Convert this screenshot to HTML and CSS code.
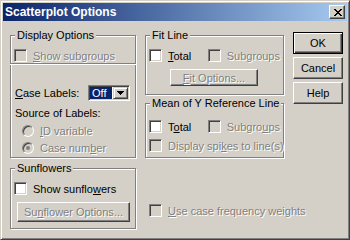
FILE: index.html
```html
<!DOCTYPE html>
<html lang="en">
<head>
  <meta charset="UTF-8">
  <title>Scatterplot Options</title>
  <link rel="stylesheet" href="styles.css">
</head>
<body>
  <div class="window">
    <div class="titlebar">
      <span class="title">Scatterplot Options</span>
      <span class="close-btn">
        <svg width="8" height="7" viewBox="0 0 8 7" shape-rendering="crispEdges">
          <path d="M0 0h2v1H0zM6 0h2v1H6zM1 1h2v1H1zM5 1h2v1H5zM2 2h4v1H2zM3 3h2v1H3zM2 4h4v1H2zM1 5h2v1H1zM5 5h2v1H5zM0 6h2v1H0zM6 6h2v1H6z" fill="#000"/>
        </svg>
      </span>
    </div>

    <div class="content">
      <!-- left column -->
      <div class="col col-left">
        <fieldset class="group g-display">
          <legend>Display Options</legend>
          <div class="check disabled first-row">
            <span class="box"></span><span class="txt"><u>S</u>how subgroups</span>
          </div>
          <div class="sep"></div>
          <div class="case-row">
            <span class="case-label"><u>C</u>ase Labels:</span>
            <span class="combo">
              <span class="combo-val">Off</span>
              <span class="combo-btn">
                <svg width="7" height="4" viewBox="0 0 7 4" shape-rendering="crispEdges">
                  <path d="M0 0h7v1H0zM1 1h5v1H1zM2 2h3v1H2zM3 3h1v1H3z" fill="#000"/>
                </svg>
              </span>
            </span>
          </div>
          <div class="src-label">Source of Labels:</div>
          <div class="radio disabled">
            <span class="dot"></span><span class="txt"><u>I</u>D variable</span>
          </div>
          <div class="radio disabled checked">
            <span class="dot"></span><span class="txt">Case num<u>b</u>er</span>
          </div>
        </fieldset>

        <fieldset class="group g-sun">
          <legend>Sunflowers</legend>
          <div class="check first-row">
            <span class="box"></span><span class="txt">Show sunflo<u>w</u>ers</span>
          </div>
          <div class="btn disabled sun-btn">Su<u>n</u>flower Options...</div>
        </fieldset>
      </div>

      <!-- middle column -->
      <div class="col col-mid">
        <fieldset class="group g-fit">
          <legend>Fit Line</legend>
          <div class="check-row first-row">
            <div class="check wide"><span class="box"></span><span class="txt"><u>T</u>otal</span></div>
            <div class="check disabled"><span class="box"></span><span class="txt">Subgroups</span></div>
          </div>
          <div class="btn disabled fit-btn"><u>F</u>it Options...</div>
        </fieldset>

        <fieldset class="group g-mean">
          <legend>Mean of Y Reference Line</legend>
          <div class="check-row mean-row">
            <div class="check wide"><span class="box"></span><span class="txt">T<u>o</u>tal</span></div>
            <div class="check disabled"><span class="box"></span><span class="txt">Subgro<u>u</u>ps</span></div>
          </div>
          <div class="check disabled spikes">
            <span class="box"></span><span class="txt">Display spi<u>k</u>es to line(s)</span>
          </div>
        </fieldset>

        <div class="check disabled weights">
          <span class="box"></span><span class="txt"><u>U</u>se case frequency weights</span>
        </div>
      </div>

      <!-- buttons -->
      <div class="col col-right">
        <div class="btn default">OK</div>
        <div class="btn">Cancel</div>
        <div class="btn">Help</div>
      </div>
    </div>
  </div>
</body>
</html>
```

FILE: styles.css
```css
* {
  box-sizing: border-box;
}

body {
  margin: 0;
  background: #d4d0c8;
}

.window {
  width: 350px;
  height: 240px;
  padding: 2px;
  border: 1px solid;
  border-color: #d4d0c8 #404040 #404040 #d4d0c8;
  box-shadow: inset 1px 1px #fff, inset -1px -1px #808080;
  background: #d4d0c8;
  font-family: "Liberation Sans", Arial, sans-serif;
  font-size: 11px;
  color: #000;
}

/* title bar */
.titlebar {
  height: 18px;
  display: flex;
  align-items: center;
  justify-content: space-between;
  padding: 0 2px;
  background: linear-gradient(to right, #0a246a, #a6caf0);
}

.title {
  color: #fff;
  font-weight: bold;
  font-size: 12px;
}

.close-btn {
  width: 16px;
  height: 14px;
  display: flex;
  align-items: center;
  justify-content: center;
  padding-left: 1px;
  background: #d4d0c8;
  border: 1px solid;
  border-color: #fff #404040 #404040 #fff;
  box-shadow: inset -1px -1px #808080;
}

/* columns */
.content {
  display: flex;
  padding: 8px 0 0 7px;
}

.col-left {
  width: 126px;
}

.col-mid {
  width: 139px;
  margin-left: 9px;
}

.col-right {
  width: 50px;
  margin-left: 9px;
  padding-top: 3px;
  display: flex;
  flex-direction: column;
  gap: 3px;
}

/* group boxes */
.group {
  margin: 0;
  padding: 0 3px;
  border: 1px solid #808080;
  box-shadow: inset 1px 1px #fff, 1px 1px #fff;
  min-width: 0;
}

.group legend {
  padding: 0 2px;
  margin-left: 1px;
  line-height: 13px;
  white-space: nowrap;
  background: #d4d0c8;
}

.first-row {
  margin-top: 7px;
}

.g-display {
  padding-bottom: 3px;
}

.sep {
  height: 2px;
  margin: 1px -4px 0;
  border-top: 1px solid #808080;
  border-bottom: 1px solid #fff;
}

.g-sun {
  margin-top: 4px;
  padding-bottom: 6px;
}

.g-fit {
  padding-bottom: 8px;
}

.g-mean {
  margin-top: 2px;
  padding-bottom: 5px;
}

/* check boxes and radios */
.check,
.radio {
  display: flex;
  align-items: center;
  height: 13px;
  white-space: nowrap;
}

.check-row {
  display: flex;
}

.check.wide {
  width: 60px;
}

.box {
  flex: none;
  width: 13px;
  height: 13px;
  border: 1px solid;
  border-color: #808080 #fff #fff #808080;
  box-shadow: inset 1px 1px #404040, inset -1px -1px #d4d0c8;
  background: #fff;
}

.txt {
  margin-left: 6px;
}

.disabled .box {
  background: #d4d0c8;
}

.disabled .txt,
.btn.disabled {
  color: #808080;
  text-shadow: 1px 1px 0 #fff;
}

.radio {
  margin-left: 8px;
  height: 12px;
}

.dot {
  flex: none;
  width: 12px;
  height: 12px;
  border-radius: 50%;
  border: 1px solid;
  border-color: #808080 #fff #fff #808080;
  box-shadow: inset 1px 1px #404040, inset -1px -1px #d4d0c8;
  background: #fff;
  display: flex;
  align-items: center;
  justify-content: center;
}

.disabled .dot {
  background: #d4d0c8;
}

.checked .dot::after {
  content: "";
  width: 4px;
  height: 4px;
  border-radius: 50%;
  background: #000;
}

.disabled.checked .dot::after {
  background: #808080;
}

.radio + .radio {
  margin-top: 5px;
}

/* case labels */
.case-row {
  display: flex;
  align-items: center;
  margin-top: 20px;
  padding-left: 1px;
}

.case-label {
  width: 73px;
}

.combo {
  display: flex;
  align-items: center;
  width: 42px;
  height: 16px;
  padding: 2px;
  border: 1px solid;
  border-color: #808080 #fff #fff #808080;
  box-shadow: inset 1px 1px #404040, inset -1px -1px #d4d0c8;
  background: #fff;
}

.combo-val {
  flex: 1;
  height: 12px;
  line-height: 12px;
  padding-left: 2px;
  margin-left: -1px;
  background: #0a246a;
  color: #fff;
}

.combo-btn {
  flex: none;
  width: 15px;
  height: 12px;
  margin: 0 -1px 0 1px;
  display: flex;
  align-items: center;
  justify-content: center;
  background: #d4d0c8;
  border: 1px solid;
  border-color: #d4d0c8 #404040 #404040 #d4d0c8;
  box-shadow: inset 1px 1px #fff, inset -1px -1px #808080;
}

.src-label {
  margin-top: 6px;
  padding-left: 1px;
  line-height: 13px;
}

.src-label + .radio {
  margin-top: 5px;
}

/* buttons */
.btn {
  display: flex;
  align-items: center;
  justify-content: center;
  height: 22px;
  background: #d4d0c8;
  border: 1px solid;
  border-color: #fff #404040 #404040 #fff;
  box-shadow: inset -1px -1px #808080;
  white-space: nowrap;
}

.btn.default {
  border-color: #000;
  box-shadow: inset 1px 1px #fff, inset -1px -1px #404040, inset -2px -2px #808080;
}

.sun-btn {
  width: 113px;
  height: 20px;
  margin: 7px 0 0 3px;
}

.fit-btn {
  width: 88px;
  height: 17px;
  margin: 7px 0 0 21px;
}

.mean-row {
  margin-top: 10px;
}

.spikes {
  margin-top: 6px;
}

.weights {
  margin: 46px 0 0 4px;
}
```
